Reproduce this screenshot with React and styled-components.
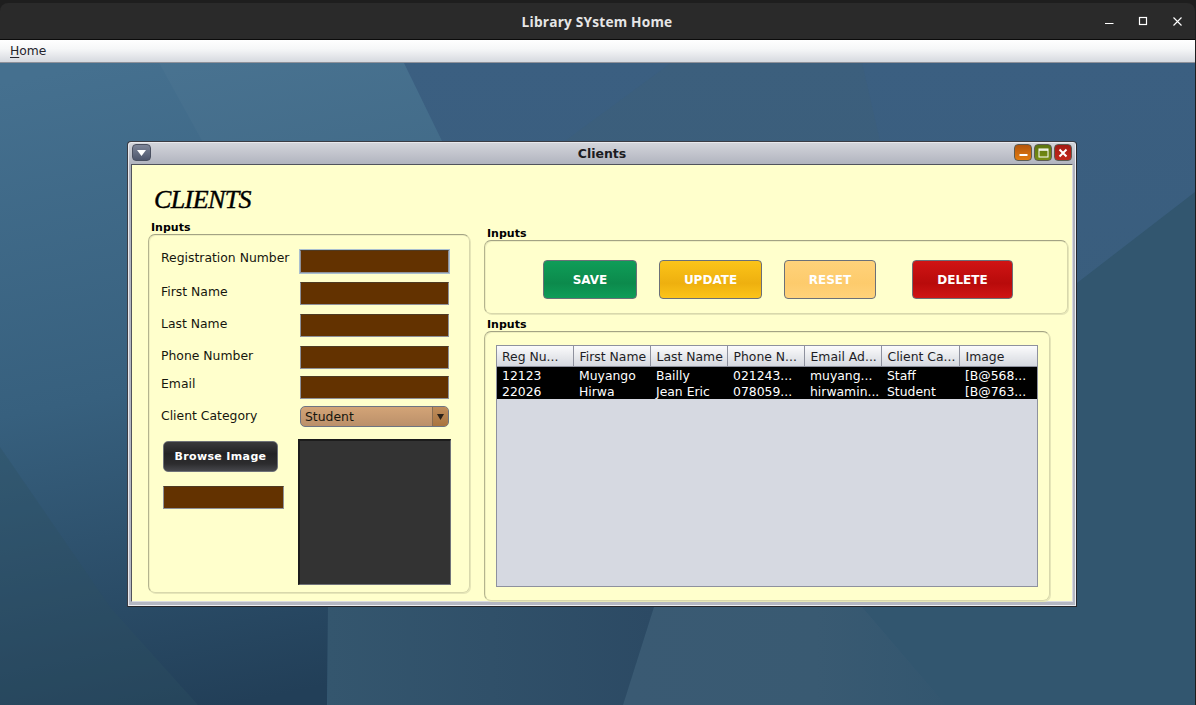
import React from 'react'
import styled, { createGlobalStyle } from 'styled-components'

const GlobalStyle = createGlobalStyle`
    html, body {
        margin: 0;
        padding: 0;
        width: 1196px;
        height: 705px;
        overflow: hidden;
        background: #1e1e1e;
    }
    * {
        box-sizing: border-box;
    }
`

const columns = ['Reg Nu...', 'First Name', 'Last Name', 'Phone N...', 'Email Ad...', 'Client Ca...', 'Image']
const widths = [76, 77, 77, 77, 77, 78, 78]
const clients = [
    ['12123', 'Muyango', 'Bailly', '021243...', 'muyang...', 'Staff', '[B@568...'],
    ['22026', 'Hirwa', 'Jean Eric', '078059...', 'hirwamin...', 'Student', '[B@763...'],
]

// papel de parede do desktop
function Wallpaper() {
    return (
        <WallSvg viewBox="0 0 1195 642" preserveAspectRatio="none">
            <defs>
                <linearGradient id="wallLeft" gradientUnits="userSpaceOnUse" x1="100" y1="0" x2="230" y2="642">
                    <stop offset="0" stopColor="#45708f" />
                    <stop offset="0.5" stopColor="#37607e" />
                    <stop offset="1" stopColor="#223f58" />
                </linearGradient>
                <linearGradient id="wallBase" x1="0" y1="0" x2="0" y2="1">
                    <stop offset="0" stopColor="#3b5f81" />
                    <stop offset="0.5" stopColor="#395d7c" />
                    <stop offset="1" stopColor="#345871" />
                </linearGradient>
                <linearGradient id="wallMid" x1="0" y1="0" x2="1" y2="0">
                    <stop offset="0" stopColor="#34566e" />
                    <stop offset="1" stopColor="#2c4a64" />
                </linearGradient>
                <linearGradient id="wallGlow" x1="0" y1="0" x2="1" y2="0">
                    <stop offset="0" stopColor="#3a5a73" />
                    <stop offset="0.6" stopColor="#395a72" />
                    <stop offset="1" stopColor="#33566f" />
                </linearGradient>
            </defs>
            <rect width="1195" height="642" fill="url(#wallBase)" />
            <polygon points="671,0 862,0 880,78 565,78" fill="#3d6078" opacity="0.45" />
            <polygon points="1077,220 1195,129 1195,642 946,642 862,544 862,300" fill="#32566f" />
            <polygon points="654,544 862,544 946,642 623,642" fill="url(#wallGlow)" />
            <polygon points="328,400 654,400 654,544 623,642 328,642" fill="url(#wallMid)" />
            <path d="M0 0 L404 0 L442 78 C 470 250 340 400 328 544 L327 642 L0 642 Z" fill="url(#wallLeft)" />
            <polygon points="159,0 404,0 442,78 202,78" fill="#ffffff" opacity="0.025" />
            <polygon points="0,384 110,544 198,642 0,642" fill="#2e5062" opacity="0.35" />
        </WallSvg>
    )
}

function App() {
    return (
        <Screen>
            <GlobalStyle />
            <TitleBar>
                <TitleText>Library SYstem Home</TitleText>
                <WindowControls>
                    <svg width="12" height="12" viewBox="0 0 12 12"><path d="M1 7.5H9.5" stroke="#fff" strokeWidth="1" /></svg>
                    <svg width="12" height="12" viewBox="0 0 12 12"><rect x="1.5" y="1.5" width="7" height="7" fill="none" stroke="#fff" strokeWidth="1.2" /></svg>
                    <svg width="12" height="12" viewBox="0 0 12 12"><path d="M1.5 1.5L9.5 9.5M9.5 1.5L1.5 9.5" stroke="#fff" strokeWidth="1.1" /></svg>
                </WindowControls>
            </TitleBar>
            <MenuBar>
                <MenuItem><u>H</u>ome</MenuItem>
            </MenuBar>
            <Desktop>
                <Wallpaper />
                <InternalFrame>
                    <FrameBar>
                        <MenuButton>
                            <svg width="9" height="6" viewBox="0 0 9 6"><path d="M0 0H9L4.5 6Z" fill="#fff" /></svg>
                        </MenuButton>
                        <FrameTitle>Clients</FrameTitle>
                        <FrameButtons>
                            <FrameButton $from="#b4560c" $to="#e27c10">
                                <svg width="9" height="9" viewBox="0 0 9 9"><rect x="0.5" y="6" width="8" height="2" fill="#fff" /></svg>
                            </FrameButton>
                            <FrameButton $from="#5b7410" $to="#7a8f14">
                                <svg width="11" height="10" viewBox="0 0 11 10"><rect x="1" y="1" width="9" height="8" fill="none" stroke="#fff" strokeWidth="1" /><path d="M1 2H10" stroke="#fff" strokeWidth="1.5" /></svg>
                            </FrameButton>
                            <FrameButton $from="#a31a14" $to="#c2281c">
                                <svg width="10" height="10" viewBox="0 0 10 10"><path d="M1.5 1.5L8.5 8.5M8.5 1.5L1.5 8.5" stroke="#fff" strokeWidth="2" /></svg>
                            </FrameButton>
                        </FrameButtons>
                    </FrameBar>
                    <Content>
                        <LeftColumn>
                            <Heading>CLIENTS</Heading>
                            <GroupLabel>Inputs</GroupLabel>
                            <FormPanel>
                                <FieldRow $top={0}>
                                    <FieldLabel $pad={1}>Registration Number</FieldLabel>
                                    <Field $focused />
                                </FieldRow>
                                <FieldRow $top={9}>
                                    <FieldLabel $pad={3}>First Name</FieldLabel>
                                    <Field />
                                </FieldRow>
                                <FieldRow $top={9}>
                                    <FieldLabel $pad={3}>Last Name</FieldLabel>
                                    <Field />
                                </FieldRow>
                                <FieldRow $top={9}>
                                    <FieldLabel $pad={3}>Phone Number</FieldLabel>
                                    <Field />
                                </FieldRow>
                                <FieldRow $top={7}>
                                    <FieldLabel $pad={1}>Email</FieldLabel>
                                    <Field />
                                </FieldRow>
                                <FieldRow $top={7}>
                                    <FieldLabel $pad={3}>Client Category</FieldLabel>
                                    <Combo>
                                        <ComboValue>Student</ComboValue>
                                        <ComboArrow>
                                            <svg width="7" height="6" viewBox="0 0 7 6"><path d="M0 0H7L3.5 6Z" fill="#2a2018" /></svg>
                                        </ComboArrow>
                                    </Combo>
                                </FieldRow>
                                <ImageRow>
                                    <BrowseColumn>
                                        <BrowseButton>Browse Image</BrowseButton>
                                        <PathField />
                                    </BrowseColumn>
                                    <ImageBox />
                                </ImageRow>
                            </FormPanel>
                        </LeftColumn>
                        <RightColumn>
                            <GroupLabel>Inputs</GroupLabel>
                            <ActionPanel>
                                <ActionButton $w={94} $left={58} $from="#0f9d58" $to="#0c8a4c">SAVE</ActionButton>
                                <ActionButton $w={103} $left={22} $from="#fcc419" $to="#eeb00f">UPDATE</ActionButton>
                                <ActionButton $w={92} $left={22} $from="#ffd27a" $to="#fdcb6c">RESET</ActionButton>
                                <ActionButton $w={101} $left={36} $from="#d01414" $to="#b80b0b">DELETE</ActionButton>
                            </ActionPanel>
                            <GroupLabel $top={4}>Inputs</GroupLabel>
                            <TablePanel>
                                <TableBox>
                                    <Grid>
                                        <colgroup>
                                            {widths.map((w, i) => <col key={i} width={w} />)}
                                        </colgroup>
                                        <thead>
                                            <tr>
                                                {columns.map((c) => <HeadCell key={c}>{c}</HeadCell>)}
                                            </tr>
                                        </thead>
                                        <tbody>
                                            {clients.map((row) => (
                                                <tr key={row[0]}>
                                                    {row.map((v, i) => <Cell key={i}>{v}</Cell>)}
                                                </tr>
                                            ))}
                                        </tbody>
                                    </Grid>
                                </TableBox>
                            </TablePanel>
                        </RightColumn>
                    </Content>
                </InternalFrame>
            </Desktop>
        </Screen>
    )
}

export default App

const Screen = styled.div`
    width: 1196px;
    height: 705px;
    padding-top: 3px;
    border-right: 1px solid #1e1e1e;
    display: flex;
    flex-direction: column;
    font-family: "DejaVu Sans", sans-serif;
    font-size: 12px;
`
const TitleBar = styled.div`
    position: relative;
    height: 37px;
    flex: none;
    background: #2a2a2a;
    border-bottom: 1px solid #0b0b0b;
    border-radius: 8px 8px 0 0;
    display: flex;
    align-items: center;
    justify-content: center;
`
const TitleText = styled.div`
    color: #e6e6e6;
    font-family: "Open Sans", sans-serif;
    font-weight: 700;
    font-size: 13.7px;
    letter-spacing: 0.2px;
    padding-right: 1px;
    padding-top: 1px;
`
// botoes do gerenciador de janelas
const WindowControls = styled.div`
    position: absolute;
    right: 11px;
    top: 13px;
    display: flex;
    gap: 22px;
`
const MenuBar = styled.div`
    height: 23px;
    flex: none;
    background: linear-gradient(#ffffff 0, #f6f7f8 40%, #d6d9df 100%);
    border-bottom: 1px solid #8e919a;
    display: flex;
    align-items: center;
    padding-left: 10px;
`
const MenuItem = styled.span`
    font-size: 12.3px;
    color: #24242c;
    u {
        text-underline-offset: 2px;
    }
`
const Desktop = styled.div`
    position: relative;
    flex: 1;
    overflow: hidden;
`
const WallSvg = styled.svg`
    position: absolute;
    inset: 0;
    width: 100%;
    height: 100%;
`
const InternalFrame = styled.div`
    position: absolute;
    left: 127px;
    top: 78px;
    width: 950px;
    height: 466px;
    background: linear-gradient(#d4d6dc, #aeb1bc 24px, #b4b7c2 100%);
    border: 1px solid #26272c;
    border-top-color: #3a3c44;
    border-left-color: #3a3c44;
    border-radius: 4px 4px 0 0;
    box-shadow: inset 1px 1px 0 #e8e9ed, inset -1px -1px 0 #eeeff2;
    display: flex;
    flex-direction: column;
    padding: 0 3px 4px 3px;
`
const FrameBar = styled.div`
    position: relative;
    height: 22px;
    flex: none;
    display: flex;
    align-items: center;
    justify-content: center;
`
const FrameTitle = styled.div`
    font-weight: 700;
    font-size: 12.5px;
    color: #1c1c22;
`
const MenuButton = styled.div`
    position: absolute;
    left: 1px;
    top: 2px;
    width: 19px;
    height: 17px;
    border-radius: 4px;
    border: 1px solid #4a5060;
    background: linear-gradient(#7d8598, #4d566c);
    display: flex;
    align-items: center;
    justify-content: center;
`
const FrameButtons = styled.div`
    position: absolute;
    right: 1px;
    top: 2px;
    display: flex;
    gap: 2px;
`
const FrameButton = styled.div`
    width: 18px;
    height: 17px;
    border-radius: 4px;
    border: 1px solid #5c5c52;
    background: linear-gradient(${(p) => p.$from}, ${(p) => p.$to});
    display: flex;
    align-items: center;
    justify-content: center;
`
const Content = styled.div`
    flex: 1;
    background: #ffffcc;
    border: 1px solid #50535c;
    border-bottom-color: #d9dae0;
    border-right-color: #d9dae0;
    display: flex;
    padding-left: 16px;
    min-height: 0;
`
const LeftColumn = styled.div`
    width: 322px;
    flex: none;
    display: flex;
    flex-direction: column;
`
const RightColumn = styled.div`
    width: 584px;
    margin-left: 14px;
    flex: none;
    display: flex;
    flex-direction: column;
    padding-top: 62px;
`
const Heading = styled.h1`
    margin: 20px 0 0 6px;
    height: 36px;
    font-family: "Liberation Serif", serif;
    font-style: italic;
    font-weight: 400;
    font-size: 26px;
    line-height: 30px;
    letter-spacing: -0.6px;
    color: #000;
    -webkit-text-stroke: 0.4px #000;
`
const GroupLabel = styled.div`
    font-size: 11px;
    font-weight: 700;
    color: #000;
    line-height: 13px;
    height: 13px;
    margin-left: 3px;
    margin-top: ${(p) => p.$top || 0}px;
`
const Panel = styled.div`
    border: 1px solid #d8d8ac;
    border-top-color: #a3a384;
    border-left-color: #b4b48e;
    border-radius: 7px;
    box-shadow: inset 1px 1px 0 #efefbe, 1px 1px 0 #e6e6b8;
`
const FormPanel = styled(Panel)`
    height: 359px;
    padding: 15px 20px 8px 12px;
    display: flex;
    flex-direction: column;
`
const FieldRow = styled.div`
    display: flex;
    justify-content: space-between;
    margin-top: ${(p) => p.$top}px;
`
const FieldLabel = styled.label`
    font-size: 12.4px;
    line-height: 14px;
    color: #16160e;
    padding-top: ${(p) => p.$pad}px;
`
const Field = styled.div`
    width: 149px;
    height: 23px;
    background: #633200;
    border: 1px solid #8e919a;
    border-top-color: #4f3a22;
    box-shadow: ${(p) => (p.$focused ? '0 0 0 1px #a9bfd0' : 'none')};
`
const Combo = styled.div`
    width: 149px;
    height: 21px;
    border-radius: 5px;
    border: 1px solid #6d7482;
    background: linear-gradient(#d3a477, #bb906a);
    display: flex;
    overflow: hidden;
`
const ComboValue = styled.div`
    flex: 1;
    padding-left: 4px;
    font-size: 12.4px;
    line-height: 19px;
    color: #16160e;
`
const ComboArrow = styled.div`
    width: 16px;
    background: linear-gradient(#bf8d5c, #a9743f);
    border-left: 1px solid #8a6d50;
    display: flex;
    align-items: center;
    justify-content: center;
`
const ImageRow = styled.div`
    display: flex;
    justify-content: space-between;
    margin-top: 12px;
    margin-right: -2px;
    padding-left: 2px;
`
const BrowseColumn = styled.div`
    display: flex;
    flex-direction: column;
    padding-top: 2px;
`
const BrowseButton = styled.button`
    width: 115px;
    height: 31px;
    padding: 0;
    border: 1px solid #6f7278;
    border-radius: 5px;
    background: linear-gradient(#3a3a3c, #232325 40%, #2c2c2e 75%, #46474c);
    color: #fff;
    font-family: "DejaVu Sans", sans-serif;
    font-weight: 700;
    font-size: 11px;
    letter-spacing: 0.35px;
`
const PathField = styled(Field)`
    width: 121px;
    margin-top: 14px;
`
const ImageBox = styled.div`
    width: 153px;
    height: 146px;
    background: #333333;
    border: 1px solid #707379;
    border-top: 2px solid #1c1c1c;
    border-left: 2px solid #1c1c1c;
`
const ActionPanel = styled(Panel)`
    height: 74px;
    display: flex;
    align-items: center;
    padding-top: 5px;
`
const ActionButton = styled.button`
    width: ${(p) => p.$w}px;
    height: 39px;
    padding: 1px 0 0;
    margin-left: ${(p) => p.$left}px;
    border: 1px solid #6b7078;
    border-radius: 4px;
    background: linear-gradient(${(p) => p.$from}, ${(p) => p.$to} 60%, ${(p) => p.$from});
    color: #fff;
    font-family: "DejaVu Sans", sans-serif;
    font-weight: 700;
    font-size: 12px;
`
const TablePanel = styled(Panel)`
    width: 566px;
    height: 271px;
    padding: 13px 11px 0 11px;
`
const TableBox = styled.div`
    width: 542px;
    height: 242px;
    background: #d6d9e1;
    border: 1px solid #8e919e;
`
const Grid = styled.table`
    border-collapse: collapse;
    table-layout: fixed;
    width: 540px;
`
const HeadCell = styled.th`
    height: 21px;
    padding: 0 0 0 6px;
    text-align: left;
    font-weight: 400;
    font-size: 12.4px;
    color: #1d1d25;
    white-space: nowrap;
    overflow: hidden;
    background: linear-gradient(#fbfbfc, #d5d8df);
    border-right: 1px solid #8e919e;
    border-bottom: 1px solid #8e919e;
    &:first-child {
        padding-left: 5px;
    }
    &:last-child {
        border-right: 0;
    }
`
const Cell = styled.td`
    height: 16px;
    padding: 2px 0 0 6px;
    background: #000;
    color: #fff;
    font-size: 12.4px;
    line-height: 14px;
    white-space: nowrap;
    overflow: hidden;
    &:first-child {
        padding-left: 5px;
    }
`
